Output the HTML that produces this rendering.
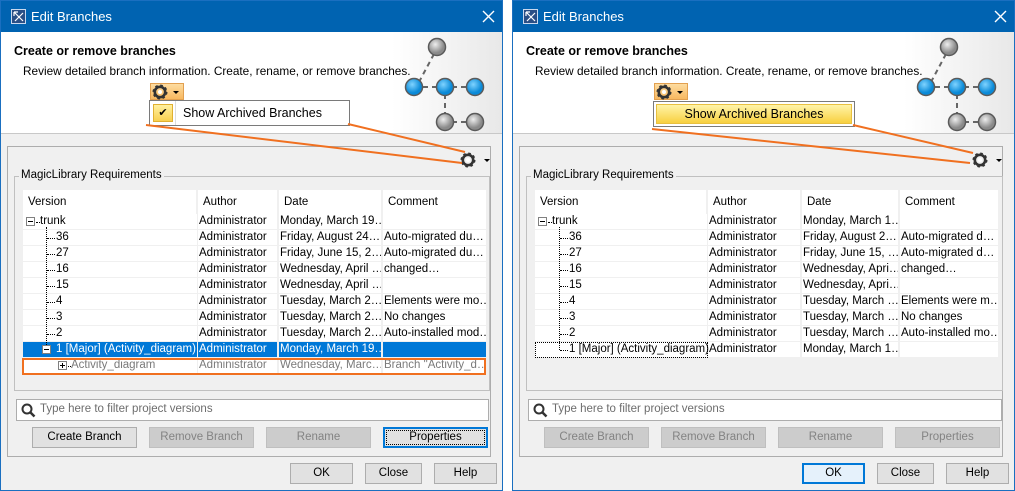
<!DOCTYPE html>
<html><head><meta charset="utf-8"><style>
*{margin:0;padding:0;box-sizing:border-box}
body{width:1015px;height:491px;background:#fff;position:relative;overflow:hidden;font-family:"Liberation Sans",sans-serif;font-size:11.5px;color:#000}
.a{position:absolute}
.dlg{position:absolute;top:0;width:503px;height:491px;background:#f0f0f0;border:1px solid #1a6fc0;overflow:hidden}
.tb{position:absolute;left:0;top:0;width:501px;height:31px;background:#0063b1;color:#fff;font-size:13px}
.hdr{position:absolute;left:0;top:31px;width:501px;height:102px;background:#fff;border-bottom:1px solid #c8c8c8}
.btn{position:absolute;height:21px;border:1px solid #adadad;background:#e1e1e1;text-align:center;line-height:19px;font-size:11.5px}
.dis{color:#838383;background:#cccccc;border-color:#bfbfbf}
.row{position:absolute;height:16px;line-height:15px;white-space:nowrap;overflow:hidden}
.c{position:absolute;top:0;height:15px;background:#fff;overflow:hidden;white-space:nowrap;padding-left:1px}
.hc{position:absolute;top:0;height:24px;line-height:24px;background:#fff;padding-left:5px}
.dot{position:absolute;border-left:1px dotted #000}
.hdot{position:absolute;border-top:1px dotted #000;height:0}
.box{position:absolute;width:9px;height:9px;border:1px solid #808080;background:#fff}
.box:after{content:"";position:absolute;left:1px;top:3px;width:5px;height:1px;background:#000}
.plus:before{content:"";position:absolute;left:3px;top:1px;width:1px;height:5px;background:#000}
.t{line-height:15px}
</style></head><body>
<svg width="0" height="0" style="position:absolute"><defs>
<g id="gear"><circle cx="8" cy="8" r="5.2" fill="none" stroke="#333" stroke-width="2.6" /><circle cx="8" cy="8" r="6.3" fill="none" stroke="#333" stroke-width="2.4" stroke-dasharray="2.5 2.45"/><circle cx="8" cy="8" r="2" fill="#fff"/></g>
</defs></svg>

<!-- ============ LEFT DIALOG ============ -->
<div class="dlg" style="left:0">
 <div class="tb">
  <svg class="a" style="left:10px;top:8px" width="15" height="15" viewBox="0 0 15 15"><rect x="0.5" y="0.5" width="14" height="14" fill="#2a4f86" stroke="#c9d8ee"/><path d="M3 3 L12 12 M12 4 L4 12 M3 3 L3 7 M3 3 L7 3" stroke="#fff" stroke-width="1.2" fill="none"/></svg>
  <div class="a" style="left:30px;top:8px">Edit Branches</div>
  <svg class="a" style="left:481px;top:9px" width="13" height="13"><path d="M1 1L12 12M12 1L1 12" stroke="#fff" stroke-width="1.4"/></svg>
 </div>
 <div class="hdr">
  <div class="a" style="right:0;top:0;width:110px;height:101px;background:linear-gradient(90deg,#fff,#e8e8e8)"></div>
  <div class="a" style="left:13px;top:12px;font-weight:bold;font-size:12.5px">Create or remove branches</div>
  <div class="a" style="left:22px;top:32px;font-size:11.8px">Review detailed branch information. Create, rename, or remove branches.</div>
  <svg class="a" style="left:395px;top:0" width="106" height="101">
   <defs><radialGradient id="g1" cx="40%" cy="35%"><stop offset="0" stop-color="#eee"/><stop offset="1" stop-color="#8a8a8a"/></radialGradient>
   <radialGradient id="b1" cx="40%" cy="35%"><stop offset="0" stop-color="#7fd3ff"/><stop offset="1" stop-color="#0a8ad8"/></radialGradient></defs>
   <g stroke="#666" stroke-width="2" stroke-dasharray="5 4"><line x1="38" y1="22" x2="23" y2="50"/><line x1="27" y1="55" x2="44" y2="55"/><line x1="56" y1="55" x2="72" y2="55"/><line x1="49" y1="62" x2="49" y2="82"/><line x1="56" y1="90" x2="72" y2="90"/></g>
   <g stroke="#5a5a5a" stroke-width="1.5"><circle cx="41" cy="15" r="8.5" fill="url(#g1)"/><circle cx="18" cy="55" r="8.5" fill="url(#b1)"/><circle cx="49" cy="55" r="8.5" fill="url(#b1)"/><circle cx="79" cy="55" r="8.5" fill="url(#b1)"/><circle cx="49" cy="90" r="8.5" fill="url(#g1)"/><circle cx="79" cy="90" r="8.5" fill="url(#g1)"/></g>
  </svg>
  <div class="a" style="left:149px;top:51px;width:34px;height:17px;background:linear-gradient(#fddca0,#f8b860);border:1px solid #e2a050"></div>
  <svg class="a" style="left:151px;top:52px" width="16" height="16"><use href="#gear"/></svg>
  <div class="a" style="left:172px;top:59px;border:3px solid transparent;border-top:3px solid #000"></div>
  <div class="a" style="left:148px;top:68px;width:201px;height:26px;background:#fff;border:1px solid #7a7a7a">
   <div class="a" style="left:3px;top:3px;width:20px;height:18px;background:linear-gradient(#fff0a0,#f8d050);border:1px solid #e0b030;text-align:center;line-height:16px;font-size:11px">✔</div>
   <div class="a" style="left:25px;top:0;width:1px;height:24px;background:#ddd"></div>
   <div class="a" style="left:33px;top:5px;font-size:12.5px">Show Archived Branches</div>
  </div>
 </div>
 <div class="a" style="left:6px;top:145px;width:484px;height:311px;border:1px solid #adadad"></div>
 <svg class="a" style="left:459px;top:151px" width="16" height="16"><use href="#gear"/></svg>
 <div class="a" style="left:483px;top:158px;border:3px solid transparent;border-top:3px solid #000"></div>
 <div class="a" style="left:13px;top:175px;width:476px;height:215px;border:1px solid #c0c0c0"></div>
 <div class="a t" style="left:18px;top:167px;background:#f0f0f0;padding:0 2px">MagicLibrary Requirements</div>
 <div class="row" style="left:22px;top:189px;width:463px;height:24px">
  <div class="hc" style="left:0;width:173px">Version</div><div class="hc" style="left:175px;width:79px">Author</div><div class="hc" style="left:256px;width:102px">Date</div><div class="hc" style="left:360px;width:103px">Comment</div>
 </div>
 <div class="row" style="left:22px;top:213px;width:463px"><div class="c" style="left:0;width:174px"></div><div class="c" style="left:175px;width:79px">Administrator</div><div class="c" style="left:256px;width:102px">Monday, March 19…</div><div class="c" style="left:360px;width:103px"></div></div>
 <div class="row" style="left:22px;top:229px;width:463px"><div class="c" style="left:0;width:174px"></div><div class="c" style="left:175px;width:79px">Administrator</div><div class="c" style="left:256px;width:102px">Friday, August 24…</div><div class="c" style="left:360px;width:103px">Auto-migrated du…</div></div>
 <div class="row" style="left:22px;top:245px;width:463px"><div class="c" style="left:0;width:174px"></div><div class="c" style="left:175px;width:79px">Administrator</div><div class="c" style="left:256px;width:102px">Friday, June 15, 2…</div><div class="c" style="left:360px;width:103px">Auto-migrated du…</div></div>
 <div class="row" style="left:22px;top:261px;width:463px"><div class="c" style="left:0;width:174px"></div><div class="c" style="left:175px;width:79px">Administrator</div><div class="c" style="left:256px;width:102px">Wednesday, April …</div><div class="c" style="left:360px;width:103px">changed…</div></div>
 <div class="row" style="left:22px;top:277px;width:463px"><div class="c" style="left:0;width:174px"></div><div class="c" style="left:175px;width:79px">Administrator</div><div class="c" style="left:256px;width:102px">Wednesday, April …</div><div class="c" style="left:360px;width:103px"></div></div>
 <div class="row" style="left:22px;top:293px;width:463px"><div class="c" style="left:0;width:174px"></div><div class="c" style="left:175px;width:79px">Administrator</div><div class="c" style="left:256px;width:102px">Tuesday, March 2…</div><div class="c" style="left:360px;width:103px">Elements were mo…</div></div>
 <div class="row" style="left:22px;top:309px;width:463px"><div class="c" style="left:0;width:174px"></div><div class="c" style="left:175px;width:79px">Administrator</div><div class="c" style="left:256px;width:102px">Tuesday, March 2…</div><div class="c" style="left:360px;width:103px">No changes</div></div>
 <div class="row" style="left:22px;top:325px;width:463px"><div class="c" style="left:0;width:174px"></div><div class="c" style="left:175px;width:79px">Administrator</div><div class="c" style="left:256px;width:102px">Tuesday, March 2…</div><div class="c" style="left:360px;width:103px">Auto-installed mod…</div></div>
 <div class="row" style="left:22px;top:341px;width:463px;color:#fff"><div class="c" style="left:0;width:174px;background:#0078d7"></div><div class="c" style="left:175px;width:79px;background:#0078d7">Administrator</div><div class="c" style="left:256px;width:102px;background:#0078d7">Monday, March 19…</div><div class="c" style="left:360px;width:103px;background:#0078d7"></div></div>
 <div class="row" style="left:22px;top:357px;width:463px;color:#7a7a7a"><div class="c" style="left:0;width:174px"></div><div class="c" style="left:175px;width:79px">Administrator</div><div class="c" style="left:256px;width:102px">Wednesday, Marc…</div><div class="c" style="left:360px;width:103px">Branch "Activity_d…</div></div>
 <div class="box" style="left:25px;top:216px"></div><div class="hdot" style="left:35px;top:221px;width:4px"></div><div class="a t" style="left:39px;top:213px">trunk</div>
 <div class="dot" style="left:45px;top:226px;height:118px"></div>
 <div class="hdot" style="left:46px;top:237px;width:8px"></div><div class="a t" style="left:55px;top:229px">36</div>
 <div class="hdot" style="left:46px;top:253px;width:8px"></div><div class="a t" style="left:55px;top:245px">27</div>
 <div class="hdot" style="left:46px;top:269px;width:8px"></div><div class="a t" style="left:55px;top:261px">16</div>
 <div class="hdot" style="left:46px;top:285px;width:8px"></div><div class="a t" style="left:55px;top:277px">15</div>
 <div class="hdot" style="left:46px;top:301px;width:8px"></div><div class="a t" style="left:55px;top:293px">4</div>
 <div class="hdot" style="left:46px;top:317px;width:8px"></div><div class="a t" style="left:55px;top:309px">3</div>
 <div class="hdot" style="left:46px;top:333px;width:8px"></div><div class="a t" style="left:55px;top:325px">2</div>
 <div class="box" style="left:41px;top:344px"></div><div class="a t" style="left:55px;top:341px;color:#fff">1 [Major] (Activity_diagram)</div>
 <div class="box plus" style="left:57px;top:360px"></div><div class="hdot" style="left:67px;top:365px;width:3px"></div><div class="a t" style="left:70px;top:357px;color:#7a7a7a">Activity_diagram</div>
 <div class="a" style="left:21px;top:357px;width:464px;height:17px;border:2px solid #f07020"></div>
 <div class="a" style="left:15px;top:398px;width:473px;height:22px;background:#fff;border:1px solid #adadad">
  <svg class="a" style="left:4px;top:3px" width="15" height="15"><circle cx="6" cy="6" r="4.5" stroke="#333" stroke-width="2" fill="none"/><path d="M9.5 9.5L13.5 13.5" stroke="#333" stroke-width="2.5"/></svg>
  <div class="a" style="left:23px;top:3px;color:#6d6d6d">Type here to filter project versions</div>
 </div>
 <div class="btn" style="left:31px;top:426px;width:105px">Create Branch</div>
 <div class="btn dis" style="left:148px;top:426px;width:105px">Remove Branch</div>
 <div class="btn dis" style="left:265px;top:426px;width:105px">Rename</div>
 <div class="btn" style="left:382px;top:426px;width:105px;border:2px solid #0078d7;line-height:17px;outline:1px dotted #000;outline-offset:-4px">Properties</div>
 <div class="btn" style="left:289px;top:462px;width:63px">OK</div>
 <div class="btn" style="left:364px;top:462px;width:57px">Close</div>
 <div class="btn" style="left:433px;top:462px;width:63px">Help</div>
</div>

<!-- ============ RIGHT DIALOG ============ -->
<div class="dlg" style="left:512px">
 <div class="tb">
  <svg class="a" style="left:10px;top:8px" width="15" height="15" viewBox="0 0 15 15"><rect x="0.5" y="0.5" width="14" height="14" fill="#2a4f86" stroke="#c9d8ee"/><path d="M3 3 L12 12 M12 4 L4 12 M3 3 L3 7 M3 3 L7 3" stroke="#fff" stroke-width="1.2" fill="none"/></svg>
  <div class="a" style="left:30px;top:8px">Edit Branches</div>
  <svg class="a" style="left:481px;top:9px" width="13" height="13"><path d="M1 1L12 12M12 1L1 12" stroke="#fff" stroke-width="1.4"/></svg>
 </div>
 <div class="hdr">
  <div class="a" style="right:0;top:0;width:110px;height:101px;background:linear-gradient(90deg,#fff,#e8e8e8)"></div>
  <div class="a" style="left:13px;top:12px;font-weight:bold;font-size:12.5px">Create or remove branches</div>
  <div class="a" style="left:22px;top:32px;font-size:11.8px">Review detailed branch information. Create, rename, or remove branches.</div>
  <svg class="a" style="left:395px;top:0" width="106" height="101">
   <defs><radialGradient id="g2" cx="40%" cy="35%"><stop offset="0" stop-color="#eee"/><stop offset="1" stop-color="#8a8a8a"/></radialGradient>
   <radialGradient id="b2" cx="40%" cy="35%"><stop offset="0" stop-color="#7fd3ff"/><stop offset="1" stop-color="#0a8ad8"/></radialGradient></defs>
   <g stroke="#666" stroke-width="2" stroke-dasharray="5 4"><line x1="38" y1="22" x2="23" y2="50"/><line x1="27" y1="55" x2="44" y2="55"/><line x1="56" y1="55" x2="72" y2="55"/><line x1="49" y1="62" x2="49" y2="82"/><line x1="56" y1="90" x2="72" y2="90"/></g>
   <g stroke="#5a5a5a" stroke-width="1.5"><circle cx="41" cy="15" r="8.5" fill="url(#g2)"/><circle cx="18" cy="55" r="8.5" fill="url(#b2)"/><circle cx="49" cy="55" r="8.5" fill="url(#b2)"/><circle cx="79" cy="55" r="8.5" fill="url(#b2)"/><circle cx="49" cy="90" r="8.5" fill="url(#g2)"/><circle cx="79" cy="90" r="8.5" fill="url(#g2)"/></g>
  </svg>
  <div class="a" style="left:141px;top:51px;width:34px;height:17px;background:linear-gradient(#fddca0,#f8b860);border:1px solid #e2a050"></div>
  <svg class="a" style="left:143px;top:52px" width="16" height="16"><use href="#gear"/></svg>
  <div class="a" style="left:164px;top:59px;border:3px solid transparent;border-top:3px solid #000"></div>
  <div class="a" style="left:140px;top:69px;width:202px;height:26px;background:#fff;border:1px solid #7a7a7a">
   <div class="a" style="left:2px;top:2px;width:196px;height:20px;background:linear-gradient(#fff4a8,#f8d040);border:1px solid #e8c040;text-align:center;line-height:18px;font-size:12.5px">Show Archived Branches</div>
  </div>
 </div>
 <div class="a" style="left:6px;top:145px;width:484px;height:311px;border:1px solid #adadad"></div>
 <svg class="a" style="left:459px;top:151px" width="16" height="16"><use href="#gear"/></svg>
 <div class="a" style="left:483px;top:158px;border:3px solid transparent;border-top:3px solid #000"></div>
 <div class="a" style="left:13px;top:175px;width:477px;height:215px;border:1px solid #c0c0c0"></div>
 <div class="a t" style="left:18px;top:167px;background:#f0f0f0;padding:0 2px">MagicLibrary Requirements</div>
 <div class="row" style="left:22px;top:189px;width:463px;height:24px">
  <div class="hc" style="left:0;width:171px">Version</div><div class="hc" style="left:173px;width:92px">Author</div><div class="hc" style="left:267px;width:96px">Date</div><div class="hc" style="left:365px;width:98px">Comment</div>
 </div>
 <div class="row" style="left:22px;top:213px;width:463px"><div class="c" style="left:0;width:172px"></div><div class="c" style="left:173px;width:92px">Administrator</div><div class="c" style="left:267px;width:96px">Monday, March 1…</div><div class="c" style="left:365px;width:98px"></div></div>
 <div class="row" style="left:22px;top:229px;width:463px"><div class="c" style="left:0;width:172px"></div><div class="c" style="left:173px;width:92px">Administrator</div><div class="c" style="left:267px;width:96px">Friday, August 2…</div><div class="c" style="left:365px;width:98px">Auto-migrated d…</div></div>
 <div class="row" style="left:22px;top:245px;width:463px"><div class="c" style="left:0;width:172px"></div><div class="c" style="left:173px;width:92px">Administrator</div><div class="c" style="left:267px;width:96px">Friday, June 15, …</div><div class="c" style="left:365px;width:98px">Auto-migrated d…</div></div>
 <div class="row" style="left:22px;top:261px;width:463px"><div class="c" style="left:0;width:172px"></div><div class="c" style="left:173px;width:92px">Administrator</div><div class="c" style="left:267px;width:96px">Wednesday, Apri…</div><div class="c" style="left:365px;width:98px">changed…</div></div>
 <div class="row" style="left:22px;top:277px;width:463px"><div class="c" style="left:0;width:172px"></div><div class="c" style="left:173px;width:92px">Administrator</div><div class="c" style="left:267px;width:96px">Wednesday, Apri…</div><div class="c" style="left:365px;width:98px"></div></div>
 <div class="row" style="left:22px;top:293px;width:463px"><div class="c" style="left:0;width:172px"></div><div class="c" style="left:173px;width:92px">Administrator</div><div class="c" style="left:267px;width:96px">Tuesday, March …</div><div class="c" style="left:365px;width:98px">Elements were m…</div></div>
 <div class="row" style="left:22px;top:309px;width:463px"><div class="c" style="left:0;width:172px"></div><div class="c" style="left:173px;width:92px">Administrator</div><div class="c" style="left:267px;width:96px">Tuesday, March …</div><div class="c" style="left:365px;width:98px">No changes</div></div>
 <div class="row" style="left:22px;top:325px;width:463px"><div class="c" style="left:0;width:172px"></div><div class="c" style="left:173px;width:92px">Administrator</div><div class="c" style="left:267px;width:96px">Tuesday, March …</div><div class="c" style="left:365px;width:98px">Auto-installed mo…</div></div>
 <div class="row" style="left:22px;top:341px;width:463px"><div class="c" style="left:0;width:172px"></div><div class="c" style="left:173px;width:92px">Administrator</div><div class="c" style="left:267px;width:96px">Monday, March 1…</div><div class="c" style="left:365px;width:98px"></div></div>
 <div class="box" style="left:25px;top:216px"></div><div class="hdot" style="left:35px;top:221px;width:4px"></div><div class="a t" style="left:39px;top:213px">trunk</div>
 <div class="dot" style="left:46px;top:226px;height:123px"></div>
 <div class="hdot" style="left:47px;top:237px;width:8px"></div><div class="a t" style="left:56px;top:229px">36</div>
 <div class="hdot" style="left:47px;top:253px;width:8px"></div><div class="a t" style="left:56px;top:245px">27</div>
 <div class="hdot" style="left:47px;top:269px;width:8px"></div><div class="a t" style="left:56px;top:261px">16</div>
 <div class="hdot" style="left:47px;top:285px;width:8px"></div><div class="a t" style="left:56px;top:277px">15</div>
 <div class="hdot" style="left:47px;top:301px;width:8px"></div><div class="a t" style="left:56px;top:293px">4</div>
 <div class="hdot" style="left:47px;top:317px;width:8px"></div><div class="a t" style="left:56px;top:309px">3</div>
 <div class="hdot" style="left:47px;top:333px;width:8px"></div><div class="a t" style="left:56px;top:325px">2</div>
 <div class="hdot" style="left:47px;top:349px;width:8px"></div><div class="a t" style="left:56px;top:341px">1 [Major] (Activity_diagram)</div>
 <div class="a" style="left:22px;top:341px;width:173px;height:16px;border:1px dotted #000"></div>
 <div class="a" style="left:15px;top:398px;width:474px;height:22px;background:#fff;border:1px solid #adadad">
  <svg class="a" style="left:4px;top:3px" width="15" height="15"><circle cx="6" cy="6" r="4.5" stroke="#333" stroke-width="2" fill="none"/><path d="M9.5 9.5L13.5 13.5" stroke="#333" stroke-width="2.5"/></svg>
  <div class="a" style="left:23px;top:3px;color:#6d6d6d">Type here to filter project versions</div>
 </div>
 <div class="btn dis" style="left:31px;top:426px;width:105px">Create Branch</div>
 <div class="btn dis" style="left:148px;top:426px;width:105px">Remove Branch</div>
 <div class="btn dis" style="left:265px;top:426px;width:105px">Rename</div>
 <div class="btn dis" style="left:382px;top:426px;width:105px">Properties</div>
 <div class="btn" style="left:289px;top:462px;width:63px;border:2px solid #0078d7;background:#e5f1fb;line-height:17px">OK</div>
 <div class="btn" style="left:364px;top:462px;width:57px">Close</div>
 <div class="btn" style="left:433px;top:462px;width:63px">Help</div>
</div>

<svg class="a" style="left:0;top:0" width="1015" height="491">
 <g stroke="#f07020" stroke-width="2" fill="none">
  <line x1="146" y1="125" x2="462" y2="163"/><line x1="348" y1="124" x2="465" y2="152"/>
  <line x1="652" y1="129" x2="970" y2="163"/><line x1="853" y1="125" x2="973" y2="153"/>
 </g>
</svg>
</body></html>
